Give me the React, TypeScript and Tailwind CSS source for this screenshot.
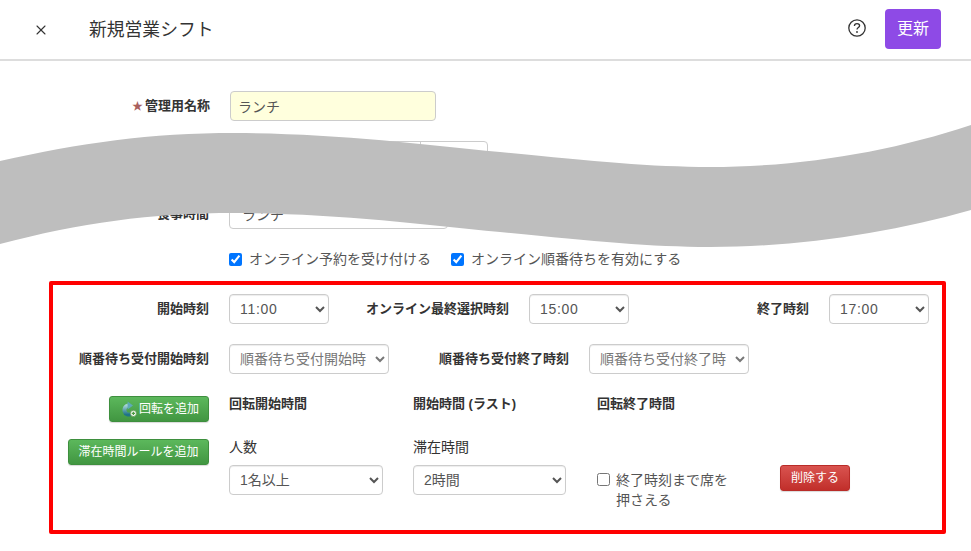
import { ReactNode } from "react";
import { X } from "lucide-react";

const fontStack = "font-['Liberation_Sans','Noto_Sans_CJK_JP',sans-serif]";

const selectClass =
  "h-[30px] rounded-[4px] border border-[#ccc] bg-white pl-[6px] pr-[2px] text-[14px] text-[#555] shadow-[inset_0_1px_1px_rgba(0,0,0,0.075)]";

const Label = ({ children, width }: { children: ReactNode; width: string }) => (
  <label className={`${width} shrink-0 text-right text-[13px] font-bold text-[#333]`}>{children}</label>
);

const TimeSelect = ({ value }: { value: string }) => (
  <select className={`${selectClass} w-[100px] shrink-0 tracking-[0.7px]`} defaultValue={value}>
    <option>{value}</option>
  </select>
);

const PlaceholderSelect = ({ value }: { value: string }) => (
  <select className={`${selectClass} w-[160px] shrink-0 !text-[#777]`} defaultValue={value}>
    <option>{value}</option>
  </select>
);

const RotateIcon = () => (
  <svg width="16" height="16" viewBox="0 0 16 16" className="mr-[2px] shrink-0">
    <defs>
      <linearGradient id="rotateFill" x1="0" y1="0" x2="0" y2="1">
        <stop offset="0" stopColor="#a5d3d6" />
        <stop offset="1" stopColor="#1f7388" />
      </linearGradient>
    </defs>
    <path d="M7 4.4 A4 4.6 0 1 0 9.4 13" fill="none" stroke="url(#rotateFill)" strokeWidth="4" />
    <path d="M6.6 0.6 L12 4.6 L6.6 8.6 Z" fill="#5ea9b8" />
    <circle cx="12.4" cy="12.4" r="3.1" fill="#f4f8f0" stroke="#4b8f3f" strokeWidth="0.7" />
    <path d="M12.4 10.7 V14.1 M10.7 12.4 H14.1" stroke="#4b9a3f" strokeWidth="1.2" />
  </svg>
);

const GreenButton = ({ children, className }: { children: ReactNode; className: string }) => (
  <button className={`${className} flex h-[26px] items-center rounded-[3px] border border-[#3e8f3e] bg-gradient-to-b from-[#5cb85c] to-[#419641] text-[12px] text-white shadow-[0_1px_1px_rgba(0,0,0,0.15)]`}>
    {children}
  </button>
);

export default function App() {
  return (
    <div className={`relative h-[551px] w-[971px] overflow-hidden bg-white ${fontStack}`}>
      {/* header */}
      <div className="flex h-[61px] items-center border-b-2 border-[#ddd] pb-[2px]">
        <X size={16} strokeWidth={1.6} className="ml-[33px] mt-[3px] text-[#333]" />
        <h1 className="ml-[40px] mt-[3px] text-[17.8px] font-normal text-[#333]">新規営業シフト</h1>
        <svg width="20" height="20" viewBox="0 0 20 20" className="ml-auto -mt-[1px] text-[#333]">
          <circle cx="10" cy="10" r="8.2" fill="none" stroke="currentColor" strokeWidth="1.3" />
          <path d="M7.4 8 C7.4 6.4 8.6 5.6 10 5.6 C11.5 5.6 12.6 6.5 12.6 7.8 C12.6 9.6 10 9.6 10 11.6" fill="none" stroke="currentColor" strokeWidth="1.3" />
          <circle cx="10" cy="14" r="0.9" fill="currentColor" />
        </svg>
        <button className="ml-[18px] mr-[30px] h-[40px] w-[56px] rounded-[4px] bg-[#8e4ae6] text-[16px] text-white">更新</button>
      </div>

      {/* form rows above the highlighted area */}
      <div className="mt-[30px] flex items-center">
        <label className="w-[210px] shrink-0 text-right text-[13px] font-bold text-[#333]">
          <span className="mr-[2px] text-[11px] font-normal text-[#a9605e]">★</span>管理用名称
        </label>
        <input
          readOnly
          value="ランチ"
          className="ml-[20px] h-[30px] w-[206px] rounded-[4px] border border-[#ccc] bg-[#ffffdd] px-[7px] text-[14px] text-[#555]"
        />
      </div>

      <div className="ml-[229px] mt-[20px] flex h-[30px] w-[259px] rounded-[4px] border border-[#ccc]">
        <div className="w-[191px] border-r border-[#ccc]" />
      </div>

      <div className="mt-[28px] flex items-center">
        <label className="w-[209px] shrink-0 text-right text-[13px] font-bold text-[#333]">食事時間</label>
        <input
          readOnly
          value="ランチ"
          className="ml-[20px] h-[30px] w-[219px] rounded-[4px] border border-[#ccc] bg-white px-[12px] text-[14px] text-[#555]"
        />
      </div>

      <div className="ml-[229px] mt-[20px] flex h-[20px] items-center text-[14px] text-[#555]">
        <input type="checkbox" defaultChecked className="h-[13px] w-[13px] accent-[#0075ff]" />
        <span className="ml-[7px]">オンライン予約を受け付ける</span>
        <input type="checkbox" defaultChecked className="ml-[20px] h-[13px] w-[13px] accent-[#0075ff]" />
        <span className="ml-[7px]">オンライン順番待ちを有効にする</span>
      </div>

      {/* highlighted area */}
      <div className="ml-[49px] mt-[12px] h-[253px] w-[897px] rounded-[2px] border-4 border-[#ff0000] pt-[9px]">
        <div className="flex items-center">
          <Label width="w-[156px]">開始時刻</Label>
          <div className="ml-[20px]"><TimeSelect value="11:00" /></div>
          <Label width="w-[180px]">オンライン最終選択時刻</Label>
          <div className="ml-[20px]"><TimeSelect value="15:00" /></div>
          <Label width="w-[180px]">終了時刻</Label>
          <div className="ml-[20px]"><TimeSelect value="17:00" /></div>
        </div>

        <div className="mt-[20px] flex items-center">
          <Label width="w-[156px]">順番待ち受付開始時刻</Label>
          <div className="ml-[20px]"><PlaceholderSelect value="順番待ち受付開始時" /></div>
          <Label width="w-[180px]">順番待ち受付終了時刻</Label>
          <div className="ml-[20px]"><PlaceholderSelect value="順番待ち受付終了時" /></div>
        </div>

        <div className="mt-[22px] flex">
          <div className="flex w-[156px] shrink-0 justify-end">
            <GreenButton className="w-[100px] pl-[11px]">
              <RotateIcon />
              回転を追加
            </GreenButton>
          </div>
          <div className="ml-[20px] w-[184px] shrink-0 text-[13px] font-bold leading-[16px] text-[#333]">回転開始時間</div>
          <div className="w-[184px] shrink-0 text-[13px] font-bold leading-[16px] text-[#333]">開始時間 (ラスト)</div>
          <div className="text-[13px] font-bold leading-[16px] text-[#333]">回転終了時間</div>
        </div>

        <div className="mt-[17px] flex">
          <div className="flex w-[156px] shrink-0 justify-end">
            <GreenButton className="w-[141px] justify-center">滞在時間ルールを追加</GreenButton>
          </div>
          <div className="ml-[20px] w-[184px] shrink-0">
            <div className="mb-[10px] text-[14px] leading-[16px] text-[#333]">人数</div>
            <select className={`${selectClass} w-[154px]`} defaultValue="1名以上">
              <option>1名以上</option>
            </select>
          </div>
          <div className="w-[184px] shrink-0">
            <div className="mb-[10px] text-[14px] leading-[16px] text-[#333]">滞在時間</div>
            <select className={`${selectClass} w-[153px]`} defaultValue="2時間">
              <option>2時間</option>
            </select>
          </div>
          <div className="flex w-[183px] shrink-0 pt-[26px]">
            <input type="checkbox" className="mt-[8px] h-[13px] w-[13px] shrink-0" />
            <span className="ml-[6px] mt-[5px] w-[120px] text-[14px] leading-[20px] text-[#555]">終了時刻まで席を押さえる</span>
          </div>
          <div className="pt-[26px]">
            <button className="h-[26px] w-[70px] rounded-[3px] border border-[#b92c28] bg-gradient-to-b from-[#d9534f] to-[#c12e2a] text-[12px] text-white shadow-[0_1px_1px_rgba(0,0,0,0.15)]">
              削除する
            </button>
          </div>
        </div>
      </div>

      {/* torn-out band lying over the form */}
      <svg width="971" height="551" viewBox="0 0 971 551" className="pointer-events-none absolute left-0 top-0">
        <path
          d="M0 161 C80 143 150 133 235 133 C330 133 420 144 500 152 C590 161 650 167 710 167 C800 167 890 152 971 125 L971 210 C890 233 800 247 710 247 C650 247 590 241 500 232 C420 224 330 213 235 213 C150 213 80 223 0 244 Z"
          fill="#bebebe"
        />
      </svg>
    </div>
  );
}
